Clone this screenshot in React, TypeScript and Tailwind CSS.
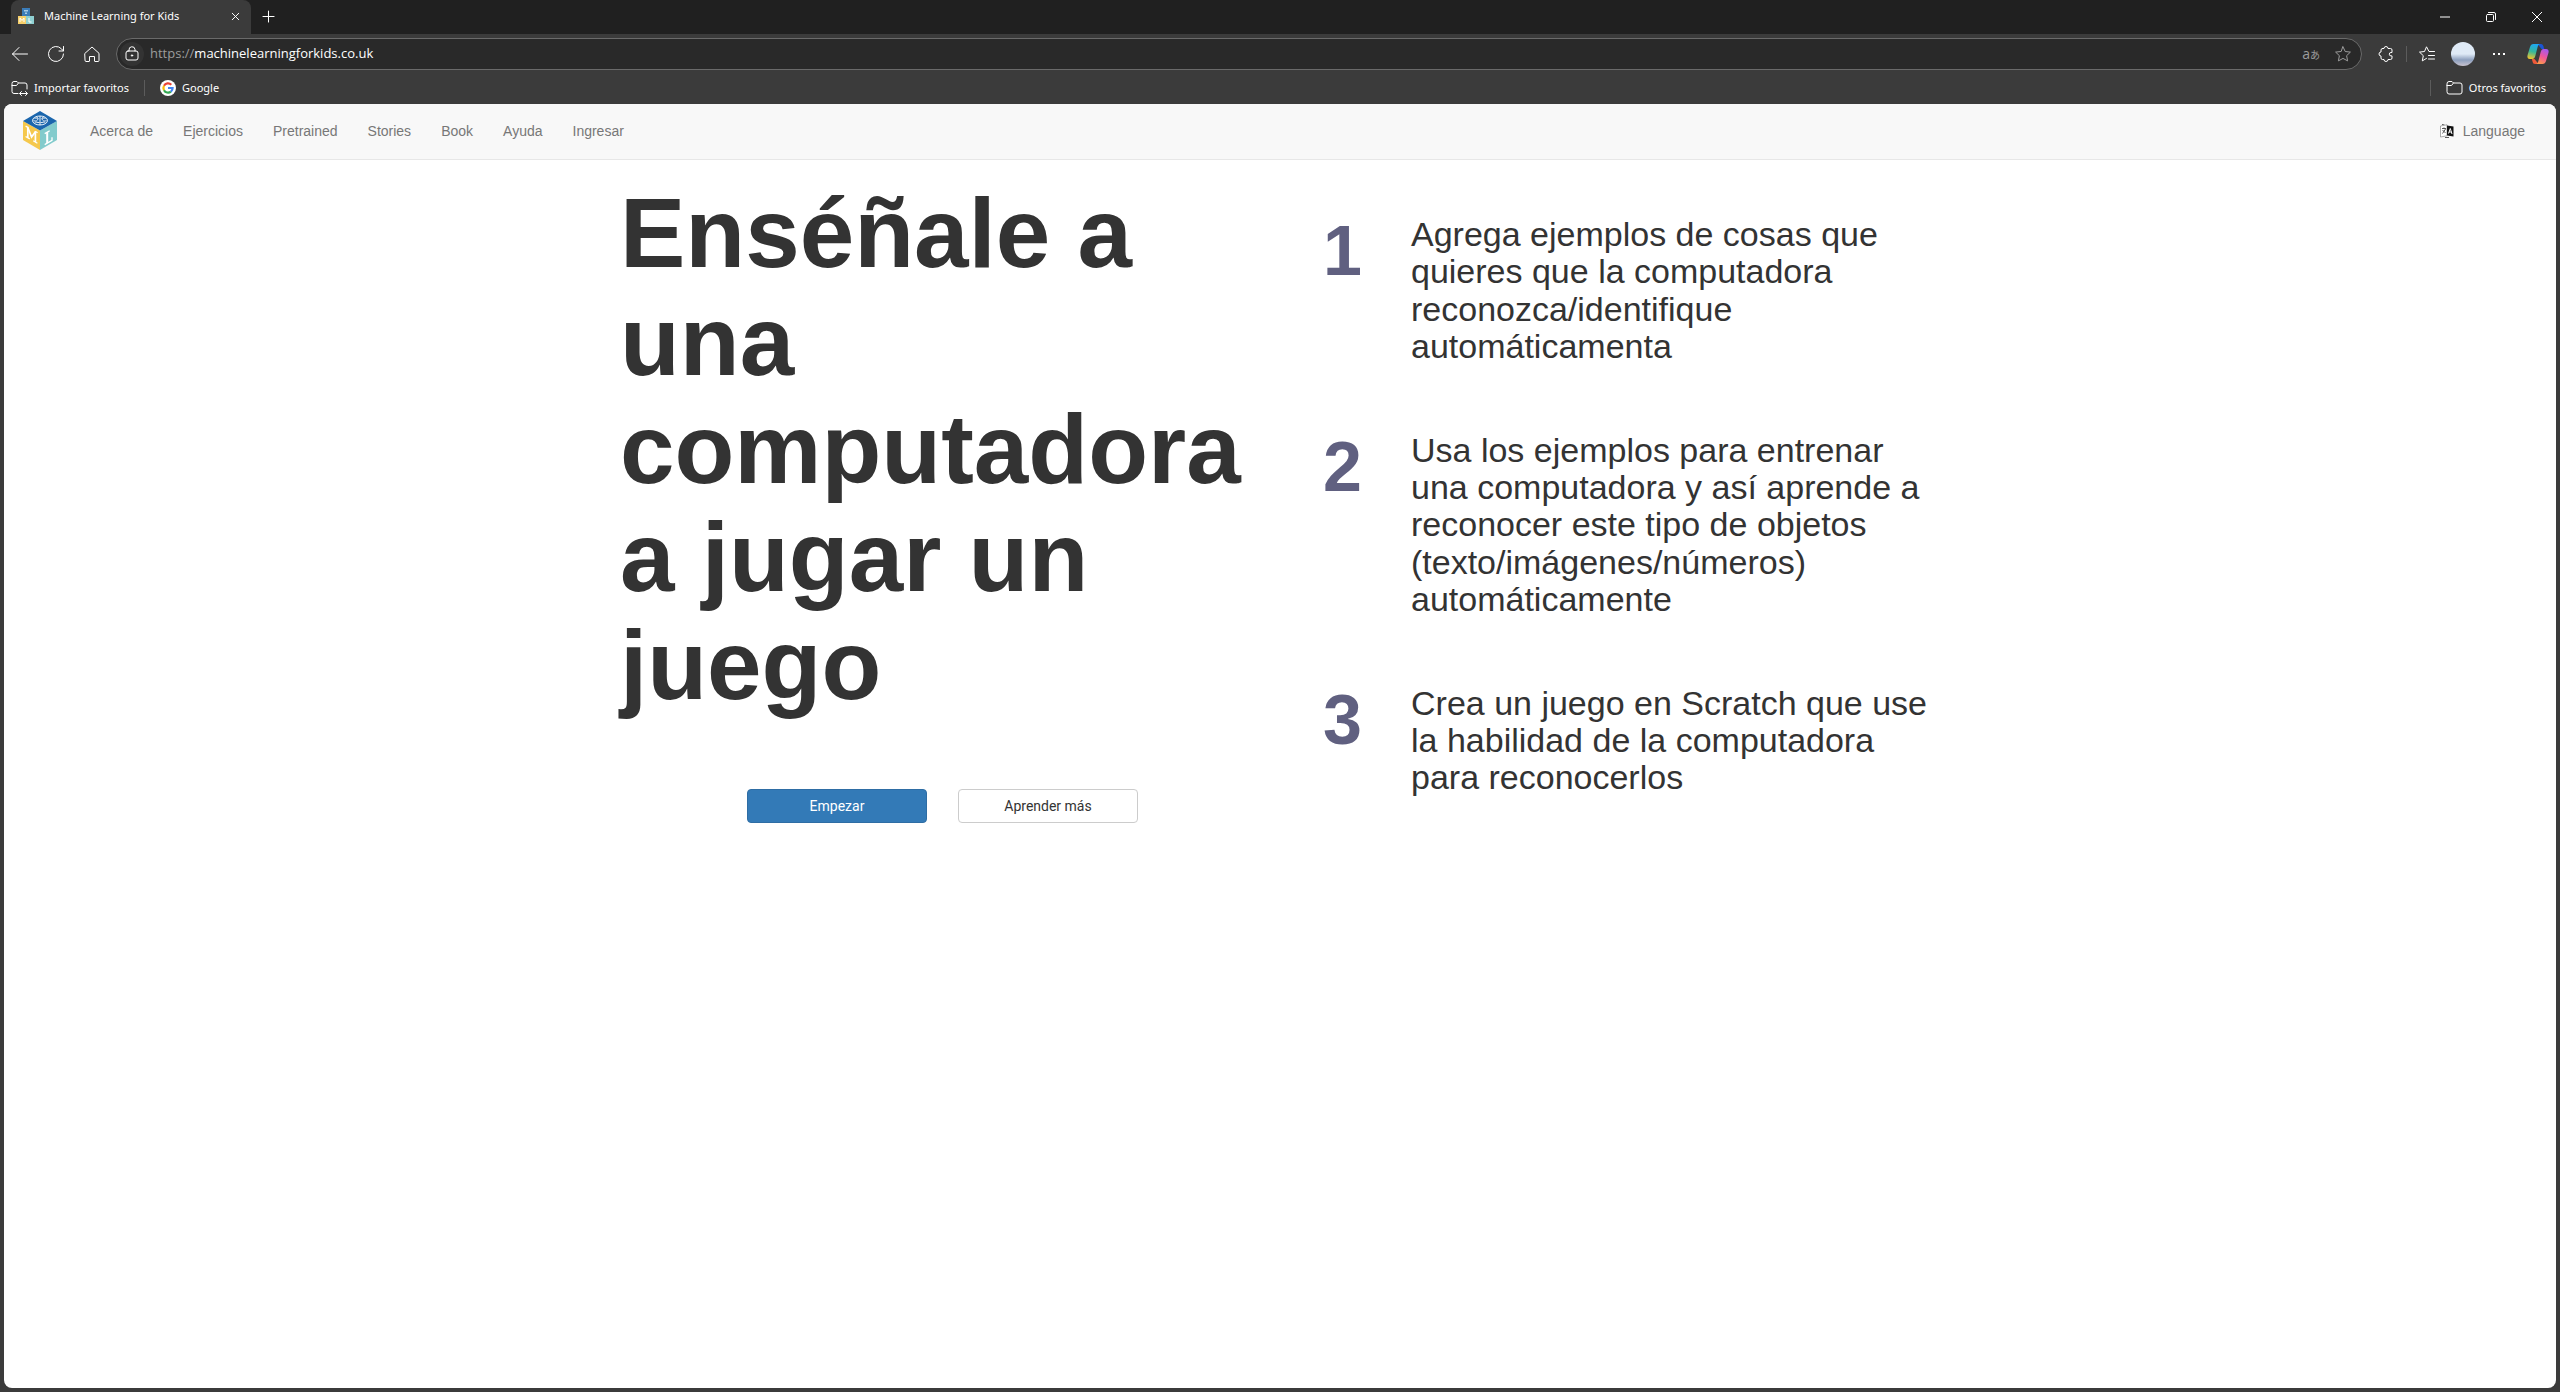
import React from "react";
import { X, Plus } from "lucide-react";

const steps = [
  "Agrega ejemplos de cosas que quieres que la computadora reconozca/identifique automáticamenta",
  "Usa los ejemplos para entrenar una computadora y así aprende a reconocer este tipo de objetos (texto/imágenes/números) automáticamente",
  "Crea un juego en Scratch que use la habilidad de la computadora para reconocerlos",
];
const nav = ["Acerca de", "Ejercicios", "Pretrained", "Stories", "Book", "Ayuda", "Ingresar"];

const line = { fill: "none", stroke: "currentColor", strokeLinecap: "round", strokeLinejoin: "round" } as const;

function BlocksIcon() {
  return (
    <svg viewBox="0 0 16 16" className="size-4 shrink-0">
      <rect x="4" y="0" width="8" height="8" fill="#3b7cb8" />
      <path d="M6 2h4v1.500H6zM7 4.500h2V6H7z" fill="#a9cbe6" />
      <rect x="0" y="8" width="8" height="8" fill="#f6cf6b" />
      <path d="M2 14v-4l2 2.500 2-2.500v4" fill="none" stroke="#fff" />
      <rect x="8" y="8" width="8" height="8" fill="#8fd0d2" />
      <path d="M11 10v4h2.500" fill="none" stroke="#fff" />
    </svg>
  );
}

function CubeLogo() {
  return (
    <svg viewBox="0 0 34 39" className="h-[39px] w-[34px]" role="img" aria-label="Machine Learning for Kids">
      <path d="M0 10 17 19.500V39L0 29z" fill="#f5c84c" />
      <path d="M34 10 17 19.500V39l17-10z" fill="#82cbcc" />
      <path d="M17 0 34 10 17 19.500 0 10z" fill="#1b66ad" />
      <g fill="none" stroke="#fff" strokeWidth=".9">
        <ellipse cx="17" cy="9.500" rx="7.500" ry="4.500" />
        <path d="M17 5v9M11.500 7.500c2-1 4 0 3 1.500s-3 1-4 .5M22.500 7.500c-2-1-4 0-3 1.500s3 1 4 .5M11.500 12c1.500-2 3 0 5-.5M22.500 12c-1.500-2-3 0-5-.5M13.500 6l2 1.500M20.500 6l-2 1.500" />
      </g>
      <g fill="none" stroke="#fff">
        <path d="M4.800 16.200v10.500M12.400 20.500v10.500" strokeWidth="1.700" />
        <path d="M4.800 16.500 8.600 26l3.800-5.200" strokeWidth="1.700" />
        <path d="m2.600 15.100 2.800 1.500M12 20.300l2.600 1.500M2.600 25.500l4.200 2.400M10.200 29.800l4.200 2.400" strokeWidth="1.300" />
        <path d="M24.200 21v11" strokeWidth="2" />
        <path d="m21.700 22.600 5-2.800M21.700 33.600l7.300-4.200v-3.200" strokeWidth="1.300" />
      </g>
    </svg>
  );
}

function FolderIcon({ arrows = false }: { arrows?: boolean }) {
  return (
    <svg viewBox="0 0 17 16" className="h-4 w-[17px] shrink-0" {...line}>
      {arrows ? (
        <>
          <path d="M7 13.500H3a2 2 0 0 1-2-2v-8a2 2 0 0 1 2-2h3L7.500 3H14a2 2 0 0 1 2 2v4M1 5.500h4.500L7.500 3" />
          <path d="M9 13.500h7M10.500 11.500l-2 2 2 2M14.500 11.500l2 2-2 2" />
        </>
      ) : (
        <path d="M1 3.500a2 2 0 0 1 2-2h3L7.500 3H14a2 2 0 0 1 2 2v7a2 2 0 0 1-2 2H3a2 2 0 0 1-2-2zM1 5.500h4.500L7.500 3" />
      )}
    </svg>
  );
}

function GoogleIcon() {
  return (
    <svg viewBox="0 0 16 16" className="size-4 shrink-0">
      <circle cx="8" cy="8" r="8" fill="#fff" />
      <g fill="none" strokeWidth="2.200">
        <path d="M4 5.800A4.600 4.600 0 0 1 11.300 4.700" stroke="#ea4335" />
        <path d="M4 10.200a4.600 4.600 0 0 1 0-4.400" stroke="#fbbc05" />
        <path d="M10.900 11.600a4.600 4.600 0 0 1-6.900-1.400" stroke="#34a853" />
        <path d="M8 8h4.600a4.600 4.600 0 0 1-1.700 3.600" stroke="#4285f4" />
      </g>
    </svg>
  );
}

function CopilotIcon() {
  return (
    <svg viewBox="0 0 22 20" className="h-5 w-[22px]">
      <defs>
        <linearGradient id="cpa" x1="0.500" y1="0" x2="0.300" y2="1">
          <stop offset="0" stopColor="#1ea7f0" />
          <stop offset="0.500" stopColor="#35b79b" />
          <stop offset="1" stopColor="#f2c32c" />
        </linearGradient>
        <linearGradient id="cpb" x1="0.700" y1="0" x2="0.300" y2="1">
          <stop offset="0" stopColor="#a458f0" />
          <stop offset="0.500" stopColor="#f0569a" />
          <stop offset="1" stopColor="#fb9a4b" />
        </linearGradient>
      </defs>
      <path d="M10.500 0H14c1.500 0 2 1 2.400 2.300L17.200 5H14.500z" fill="#1a55d6" />
      <path d="M11.500 20H8c-1.500 0-2-1-2.400-2.300L4.800 15h2.700z" fill="#ee5a3a" />
      <path d="M6.500 0h6.300c-1.300.3-1.800 1.500-2.200 3L8.300 12c-.6 2-1.300 3-3.100 3H3C.5 15 0 13 .6 11L3 3C3.700 1 4.500 0 6.500 0z" fill="url(#cpa)" />
      <path d="M15.500 20H9.200c1.300-.3 1.800-1.500 2.200-3l2.300-9c.6-2 1.300-3 3.100-3H19c2.500 0 3 2 2.400 4L19 17c-.7 2-1.500 3-3.500 3z" fill="url(#cpb)" />
    </svg>
  );
}

function LanguageIcon() {
  return (
    <svg viewBox="0 0 14 14" className="size-3.5 shrink-0">
      <path d="M.5 2 7 .8v11L.5 13z" fill="#fff" stroke="#888" strokeWidth=".7" />
      <path d="M2 4.500h4M4 3.500v1M5.500 5 2.500 9.500M2.500 6 5.500 9" fill="none" stroke="#333" strokeWidth=".8" />
      <path d="M7 1.500 13.500 2.500v10L7 11.500z" fill="#111" />
      <path d="m8.500 9.500 1.800-5 1.700 5.500M9 8h2.500" fill="none" stroke="#fff" />
      <path d="M2 .5 4.500 0M5 13.500h4" stroke="#333" fill="none" strokeWidth=".8" />
    </svg>
  );
}

export default function App() {
  return (
    <div className="flex min-h-screen flex-col bg-[#3b3b3b]">
      <header className="font-['Open_Sans',sans-serif] text-xs text-white">
        <div className="flex h-[34px] items-end justify-between bg-[#202020]">
          <div className="flex h-full">
            <div className="ml-[11px] flex h-full w-60 items-center rounded-t-lg bg-[#3b3b3b] pr-2 pb-[2px] pl-[7px]">
              <BlocksIcon />
              <span className="ml-[10px] grow font-['Noto_Sans',sans-serif] text-[11px]">Machine Learning for Kids</span>
              <button aria-label="Cerrar pestaña" className="grid size-4 place-items-center"><X size={13} strokeWidth={1.8} /></button>
            </div>
            <button aria-label="Nueva pestaña" className="grid w-[35px] place-items-center pb-[2px]"><Plus size={19} strokeWidth={1.3} /></button>
          </div>
          <div className="flex h-full items-center">
            <button aria-label="Minimizar" className="grid w-[46px] place-items-center"><svg viewBox="0 0 10 10" className="size-2.5" {...line}><path d="M0 5h10" /></svg></button>
            <button aria-label="Restaurar" className="grid w-[46px] place-items-center"><svg viewBox="0 0 10 10" className="size-2.5 overflow-visible" {...line}><rect x=".5" y="2.500" width="7" height="7" rx="1" /><path d="M2.500.5H8A1.500 1.500 0 0 1 9.500 2v5.500" /></svg></button>
            <button aria-label="Cerrar" className="grid w-[46px] place-items-center"><svg viewBox="0 0 10 10" className="size-2.5" {...line}><path d="m0 0 10 10M10 0 0 10" /></svg></button>
          </div>
        </div>

        <div className="flex h-10 items-center pr-[11px]">
          <button aria-label="Atrás" className="ml-3 grid size-4 place-items-center"><svg viewBox="0 0 16 16" className="size-4" {...line}><path d="M15.500 8H.5M7 1.500.5 8 7 14.500" /></svg></button>
          <button aria-label="Actualizar" className="ml-5 grid size-4 place-items-center"><svg viewBox="0 0 16 16" className="size-4" {...line}><path d="M15.500 8a7.500 7.500 0 1 1-2-5.100L15.500 5M15.500.5V5H11" /></svg></button>
          <button aria-label="Inicio" className="ml-5 grid size-4 place-items-center"><svg viewBox="0 0 16 16" className="size-4" {...line}><path d="M1 7.300 8 1l7 6.300v7.200a1 1 0 0 1-1 1h-3a.5.5 0 0 1-.5-.5v-4.500h-5V15a.5.5 0 0 1-.5.5H2a1 1 0 0 1-1-1z" /></svg></button>
          <div className="ml-4 flex h-8 grow items-center rounded-full border border-[#6a6a6a] bg-[#292929] pr-[10px] pl-[3px]">
            <button aria-label="Información del sitio" className="grid size-6 place-items-center rounded-full bg-[#333333]"><svg viewBox="0 0 16 16" className="size-4" {...line}><rect x="2" y="5" width="12" height="9" rx="2" /><path d="M5 5V4a3 3 0 0 1 6-.5V5" /><circle cx="8" cy="9.500" r=".7" fill="currentColor" /></svg></button>
            <a href="#" className="ml-[6px] grow text-[13px] text-white"><span className="text-[#9c9c9c]">https://</span>machinelearningforkids.co.uk</a>
            <button aria-label="Traducir" className="text-sm text-[#9c9c9c] font-['Open_Sans','Noto_Sans_CJK_JP',sans-serif]">a<span className="text-[10px]">あ</span></button>
            <button aria-label="Agregar a favoritos" className="ml-[15px] text-[#9c9c9c]"><svg viewBox="0 0 16 16" className="size-4" {...line}><path d="m8 .8 2.200 4.700 5.200.6-3.800 3.600 1 5.200L8 12.400l-4.600 2.500 1-5.200L.6 6.100l5.200-.6z" /></svg></button>
          </div>
          <button aria-label="Extensiones" className="ml-4"><svg viewBox="0 0 16 16" className="size-4" {...line}><path d="M4.500 2.500H6a2 2 0 0 1 4 0h2.500A1.500 1.500 0 0 1 14 4v2.500h-1a1.700 1.700 0 0 0 0 3.400h1V12a1.500 1.500 0 0 1-1.500 1.500H10a2 2 0 0 1-4 0H4.500A1.500 1.500 0 0 1 3 12v-2a2 2 0 0 1 0-4V4a1.500 1.500 0 0 1 1.500-1.500z" /></svg></button>
          <span className="mx-3 h-4 w-px bg-[#5c5c5c]" />
          <button aria-label="Favoritos"><svg viewBox="0 0 16 16" className="size-4" {...line}><path d="M15.500 5.500H10L7.500.8 5.500 5.500.5 6.100l3.800 3.600-1 5.200 4.200-2.500M9.500 9.500h6M9.500 13h6" /></svg></button>
          <button aria-label="Perfil" className="ml-4 size-6 rounded-full bg-linear-to-b from-[#dfeaf6] from-50% via-[#8d9fbd] via-75% to-[#c9c3cf]" />
          <button aria-label="Más" className="ml-4 flex w-4 justify-center gap-[3px]"><i className="size-[2px] bg-white" /><i className="size-[2px] bg-white" /><i className="size-[2px] bg-white" /></button>
          <button aria-label="Copilot" className="ml-5"><CopilotIcon /></button>
        </div>

        <nav className="flex h-[30px] items-center justify-between pr-[14px] pb-[2px] pl-[11px] font-['Noto_Sans',sans-serif] text-[11px]">
          <div className="flex items-center">
            <a href="#" className="flex items-center gap-[6px]"><FolderIcon arrows />Importar favoritos</a>
            <span className="mx-[15px] h-4 w-px bg-[#5c5c5c]" />
            <a href="#" className="flex items-center gap-[6px]"><GoogleIcon />Google</a>
          </div>
          <div className="flex items-center">
            <span className="mr-[15px] h-4 w-px bg-[#5c5c5c]" />
            <a href="#" className="flex items-center gap-[6px]"><FolderIcon />Otros favoritos</a>
          </div>
        </nav>
      </header>

      <div className="mx-1 mb-1 grow overflow-hidden rounded-lg bg-white font-['Liberation_Sans',Arial,sans-serif] text-sm text-[#333333]">
        <nav className="flex h-14 items-center justify-between border-b border-[#e7e7e7] bg-[#f8f8f8] pr-[31px] pb-[2px] pl-[19px] text-[#777777]">
          <div className="flex items-center">
            <a href="#"><CubeLogo /></a>
            <ul className="ml-[33px] flex gap-[30px]">
              {nav.map((n) => <li key={n}><a href="#">{n}</a></li>)}
            </ul>
          </div>
          <button className="flex items-center gap-[9px]"><LanguageIcon />Language</button>
        </nav>

        <main className="mx-auto flex w-full max-w-[1330px] gap-[63px]">
          <section className="w-[645px] pt-[19px] pl-[5px]">
            <h1 className="text-[98px] leading-[108px] font-bold">Enséñale a una computadora a jugar un juego</h1>
            <div className="mt-[70px] flex justify-center gap-[31px] pl-[5px] font-[Roboto,sans-serif]">
              <button className="h-[34px] w-[180px] rounded border border-[#2e6da4] bg-[#337ab7] text-white">Empezar</button>
              <button className="h-[34px] w-[180px] rounded border border-[#cccccc] bg-white">Aprender más</button>
            </div>
          </section>
          <ol className="flex w-[620px] flex-col gap-[66px] pt-14">
            {steps.map((s, i) => (
              <li key={s} className="flex">
                <span className="w-[88px] shrink-0 text-[70px] leading-[70px] font-bold text-[#606080]">{i + 1}</span>
                <p className="text-[34px] leading-[1.1]">{s}</p>
              </li>
            ))}
          </ol>
        </main>
      </div>
    </div>
  );
}
